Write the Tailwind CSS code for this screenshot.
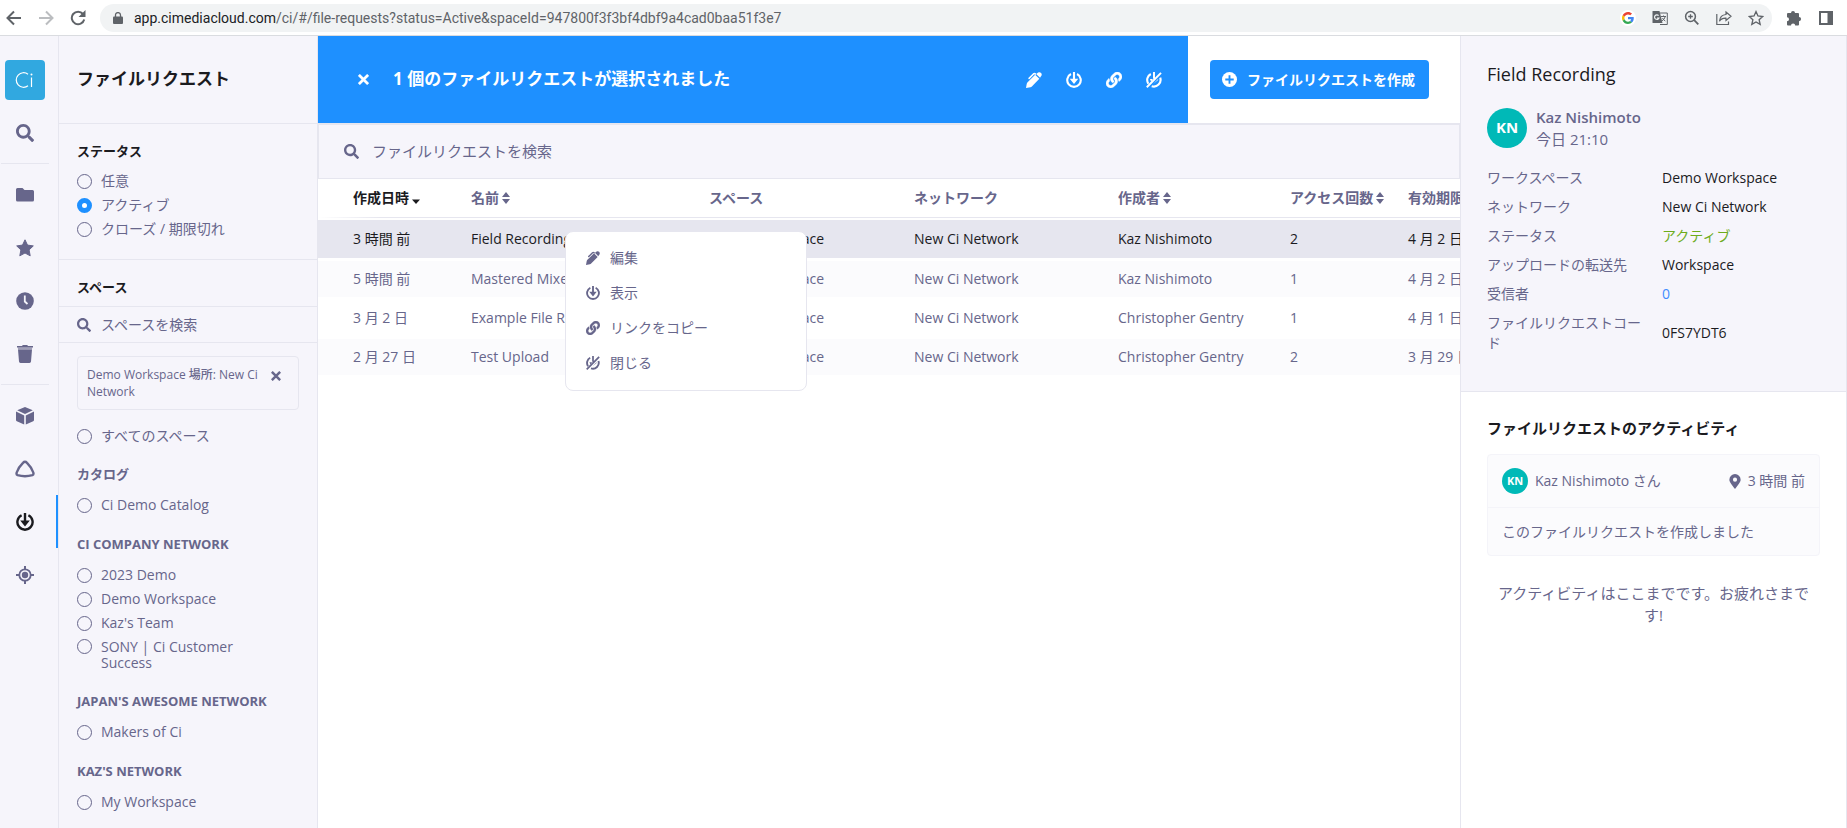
<!DOCTYPE html>
<html lang="ja">
<head>
    <meta charset="UTF-8">
    <meta name="viewport" content="width=device-width, initial-scale=1.0">
    <title>ファイルリクエスト</title>
    <script src="https://cdn.jsdelivr.net/npm/@tailwindcss/browser@4"></script>
</head>
<body class="h-screen flex flex-col overflow-hidden bg-white text-sm text-[#67668b] font-['Open_Sans','Noto_Sans_CJK_JP',sans-serif]">

    <!-- Icon set -->
    <svg class="hidden" aria-hidden="true">
        <symbol id="i-search" viewBox="0 0 512 512"><path fill="currentColor" d="M505 442.700 405.300 343c-4.500-4.500-10.600-7-17-7H372c27.600-35.300 44-79.700 44-128C416 93.100 322.900 0 208 0S0 93.100 0 208s93.100 208 208 208c48.300 0 92.700-16.400 128-44v16.300c0 6.400 2.500 12.500 7 17l99.700 99.700c9.400 9.400 24.600 9.400 33.900 0l28.300-28.300c9.400-9.400 9.400-24.600.1-34zM208 336c-70.700 0-128-57.200-128-128 0-70.700 57.200-128 128-128 70.700 0 128 57.200 128 128 0 70.700-57.200 128-128 128z"/></symbol>
        <symbol id="i-folder" viewBox="0 0 18 14"><path fill="currentColor" d="M1.500 0H6.500L8.500 2H16.500A1.500 1.500 0 0 1 18 3.500V12A1.500 1.500 0 0 1 16.500 13.500H1.500A1.500 1.500 0 0 1 0 12V1.500A1.500 1.500 0 0 1 1.500 0Z"/></symbol>
        <symbol id="i-star" viewBox="0 0 18 18"><path fill="currentColor" stroke="currentColor" stroke-linejoin="round" d="M9 .8 11.500 6.100 17.300 6.900 13.100 10.900 14.200 16.800 9 14 3.800 16.800 4.900 10.900.7 6.900 6.500 6.100Z"/></symbol>
        <symbol id="i-clock" viewBox="0 0 18 18"><circle cx="9" cy="9" r="8.800" fill="currentColor"/><path fill="none" stroke="#f6f5fb" stroke-width="1.800" d="M8.800 3.500V9.500L11.500 12"/></symbol>
        <symbol id="i-trash" viewBox="0 0 16 18"><path fill="currentColor" d="M0 1H5L5.800 0H10.200L11 1H16V2.600H0ZM1 4.500H15L14 16.600A1.500 1.500 0 0 1 12.500 18H3.500A1.500 1.500 0 0 1 2 16.600Z"/><path fill="currentColor" opacity=".6" d="M.8 2.600H15.200L15 4.500H1Z"/></symbol>
        <symbol id="i-cube" viewBox="0 0 18 18"><path fill="currentColor" d="M9 0 16.800 3.200 9 7 1.200 3.200ZM0 4.600 8.200 8.600V17.600L.8 14.300Q0 14 0 13ZM18 4.600 9.800 8.600V17.600L17.200 14.300Q18 14 18 13Z"/></symbol>
        <symbol id="i-tri" viewBox="0 0 20 18"><path fill="none" stroke="currentColor" stroke-width="2.400" stroke-linejoin="round" d="M10 1.800Q11 1.800 12 2.900Q16.700 7.500 18.300 12.500Q18.900 14.500 17.500 15.100Q10 17.300 2.500 15.100Q1.100 14.500 1.700 12.500Q3.300 7.500 8 2.900Q9 1.800 10 1.800Z"/></symbol>
        <symbol id="i-request" viewBox="0 0 18 18"><path fill="none" stroke="currentColor" stroke-width="2.400" d="M5.600 2.300A7.600 7.600 0 1 0 12.400 2.300"/><path fill="currentColor" d="M7.800 0H10.200V7.500H13.800L9 13.600 4.200 7.500H7.800Z"/></symbol>
        <symbol id="i-close-request" viewBox="0 0 18 18"><path fill="none" stroke="currentColor" stroke-width="2.400" d="M5.400 2.300A7.600 7.600 0 0 0 2.600 13.200M16 6.400A7.600 7.600 0 0 1 6.400 16"/><path fill="none" stroke="currentColor" stroke-width="2.200" d="M.9 17.200 16.900 1M9 0V7.500"/><path fill="currentColor" d="M4.400 8H7.800L5.800 11ZM8.400 13.200 13.600 7.900V9Z"/></symbol>
        <symbol id="i-target" viewBox="0 0 18 18"><path stroke="currentColor" stroke-width="2" d="M9 0V4M9 14V18M0 9H4M14 9H18"/><circle cx="9" cy="9" r="5.700" fill="none" stroke="currentColor" stroke-width="1.800"/><circle cx="9" cy="9" r="3.200" fill="currentColor"/></symbol>
        <symbol id="i-pen" viewBox="0 0 18 18"><path fill="currentColor" d="M0 18 .8 13.400Q1 12.300 1.800 11.400L10.300 3 15 7.700 6.600 16.200Q5.900 16.900 5 17.100ZM12.600 1.500Q13.500.4 14.800.3 16 .2 16.900 1.100 17.800 2 17.700 3.200 17.600 4.500 16.500 5.400L15.800 6.600 11.400 2.300Z"/><path fill="none" stroke="currentColor" stroke-width="1.800" stroke-linecap="round" d="M3.500 7.200 8.400 2.200Q9.400 1.300 10.500 2.200"/></symbol>
        <symbol id="i-link" viewBox="0 0 512 512"><path fill="currentColor" stroke="currentColor" stroke-width="12" d="M326.600 185.400c59.700 59.800 58.900 155.700.4 214.600-.1.100-.2.300-.4.400l-67.200 67.200c-59.300 59.300-155.700 59.300-215 0-59.300-59.300-59.300-155.700 0-215l37.100-37.100c9.800-9.800 26.800-3.300 27.300 10.600.6 17.700 3.800 35.500 9.700 52.700 2 5.800.6 12.300-3.800 16.600l-13.100 13.100c-28 28-28.900 73.700-1.200 102 28 28.600 74.100 28.700 102.300.5l67.200-67.200c28.200-28.200 28.100-73.800 0-101.800-3.700-3.700-7.400-6.600-10.300-8.600a16 16 0 0 1-6.900-12.600c-.4-10.600 3.300-21.500 11.700-29.800l21.100-21.100c5.500-5.500 14.200-6.200 20.600-1.700a152.500 152.500 0 0 1 20.500 17.200zM467.500 44.400c-59.300-59.300-155.700-59.300-215 0l-67.200 67.200c-.1.100-.3.300-.4.400-58.600 58.900-59.400 154.800.4 214.600a152.500 152.500 0 0 0 20.500 17.200c6.400 4.500 15.100 3.800 20.600-1.700l21.100-21.100c8.400-8.400 12.100-19.200 11.700-29.800a16 16 0 0 0-6.900-12.600c-2.900-2-6.600-4.900-10.300-8.600-28.100-28.100-28.200-73.600 0-101.800l67.200-67.200c28.200-28.200 74.200-28.100 102.300.5 27.800 28.300 26.900 73.900-1.200 102l-13.100 13.100c-4.400 4.400-5.800 10.800-3.800 16.600 5.900 17.200 9 35 9.700 52.700.5 13.900 17.500 20.400 27.300 10.600l37.100-37.100c59.300-59.300 59.300-155.700 0-215z"/></symbol>
        <symbol id="i-x" viewBox="0 0 12 12"><path stroke="currentColor" stroke-width="3" d="M1 1 11 11M11 1 1 11"/></symbol>
        <symbol id="i-plus" viewBox="0 0 16 16"><circle cx="8" cy="8" r="8" fill="currentColor"/><path stroke="#1e90ff" stroke-width="2" d="M8 3.500V12.500M3.500 8H12.500"/></symbol>
        <symbol id="i-pin" viewBox="0 0 12 16"><path fill="currentColor" fill-rule="evenodd" d="M6 0A6 6 0 0 1 12 6C12 8.500 9.500 11 6 16 2.500 11 0 8.500 0 6A6 6 0 0 1 6 0ZM6 3.800A2.200 2.200 0 1 0 6 8.200 2.200 2.200 0 1 0 6 3.800Z"/></symbol>
        <symbol id="i-sort" viewBox="0 0 8 12"><path fill="currentColor" d="M4 0 8 5H0ZM4 12 0 7H8Z"/></symbol>
        <symbol id="i-sort-down" viewBox="0 0 8 12"><path fill="currentColor" d="M4 12 0 7.500H8Z"/></symbol>
    </svg>

    <!-- Browser bar -->
    <header class="flex h-9 shrink-0 items-center border-b border-[#dadce0] bg-white text-[#5f6368]">
        <button aria-label="戻る" class="flex w-7 justify-center"><svg class="size-4" viewBox="0 0 16 16"><path fill="none" stroke="currentColor" stroke-width="2" d="M15 8H2M8 1.500 1.500 8 8 14.500"/></svg></button>
        <button aria-label="進む" class="ml-1 flex w-7 justify-center text-[#bbbdc0]"><svg class="size-4" viewBox="0 0 16 16"><path fill="none" stroke="currentColor" stroke-width="2" d="M1 8H14M8 1.500 14.500 8 8 14.500"/></svg></button>
        <button aria-label="再読み込み" class="ml-1 flex w-7 justify-center"><svg class="size-4" viewBox="0 0 16 16"><path fill="none" stroke="currentColor" stroke-width="2" d="M13 4A6.300 6.300 0 1 0 14.200 9.500"/><path fill="currentColor" d="M15.500 0V7H8.500Z"/></svg></button>
        <div class="ml-2 flex h-7 flex-1 items-center rounded-full bg-[#f1f3f4] pl-3 pr-2">
            <svg class="mr-[10px] h-3 w-3" viewBox="0 0 10 12"><path fill="currentColor" d="M1 4.500H9Q10 4.500 10 5.500V11Q10 12 9 12H1Q0 12 0 11V5.500Q0 4.500 1 4.500Z"/><path fill="none" stroke="currentColor" stroke-width="1.300" d="M2.500 5V3A2.500 2.400 0 0 1 7.500 3V5"/></svg>
            <p class="flex-1 font-['Roboto',sans-serif] text-sm whitespace-nowrap"><span class="text-[#202124]">app.cimediacloud.com</span>/ci/#/file-requests?status=Active&amp;spaceId=947800f3f3bf4dbf9a4cad0baa51f3e7</p>
            <div class="flex items-center gap-4">
                <button aria-label="Google" class="flex size-4 items-center justify-center rounded-full bg-white"><svg class="size-3" viewBox="0 0 48 48"><path fill="#ea4335" d="M24 9.500c3.500 0 6.700 1.200 9.200 3.600l6.900-6.900C35.900 2.400 30.500 0 24 0 14.600 0 6.500 5.400 2.600 13.200l8 6.200C12.400 13.700 17.700 9.500 24 9.500z"/><path fill="#4285f4" d="M47 24.600c0-1.600-.2-3.100-.4-4.600H24v9h12.900c-.6 3-2.300 5.500-4.800 7.200l7.700 6C44.400 38 47 31.800 47 24.600z"/><path fill="#fbbc05" d="M10.500 28.600c-.5-1.500-.8-3-.8-4.600s.3-3.100.8-4.600l-8-6.200C.9 16.500 0 20.100 0 24s.9 7.500 2.600 10.800z"/><path fill="#34a853" d="M24 48c6.500 0 11.900-2.100 15.900-5.800l-7.700-6c-2.200 1.500-4.900 2.300-8.200 2.300-6.300 0-11.600-4.200-13.500-9.900l-8 6.200C6.500 42.600 14.600 48 24 48z"/></svg></button>
                <button aria-label="翻訳" class="flex size-4 items-center justify-center"><svg class="size-4" viewBox="0 0 16 16"><path fill="none" stroke="currentColor" d="M8 3H15.300V14.500H8M9 6.500H14M11.500 5.500V6.500M13.300 6.500Q12.500 9.500 9.800 11M10.500 8Q11.500 10 13.300 11"/><path fill="currentColor" d="M1 1H7.500L10.500 13H1Q.5 13 .5 12.500V1.500Q.5 1 1 1Z"/><path fill="none" stroke="#f1f3f4" stroke-width="1.200" d="M6.600 5.600A2.300 2.300 0 1 0 7 8H5"/></svg></button>
                <button aria-label="ズーム" class="flex size-4 items-center justify-center"><svg class="size-4" viewBox="0 0 16 16"><circle cx="6.500" cy="6.500" r="4.900" fill="none" stroke="currentColor" stroke-width="1.500"/><path stroke="currentColor" stroke-width="1.300" d="M6.500 4.200V8.800M4.200 6.500H8.800"/><path stroke="currentColor" stroke-width="1.800" d="M10.200 10.200 14.300 14.300"/></svg></button>
                <button aria-label="共有" class="flex size-4 items-center justify-center"><svg class="size-4" viewBox="0 0 16 16"><path fill="none" stroke="currentColor" stroke-width="1.200" d="M.8 4V14.500H12.500V11.500M10 2 15 6.300 10 10.500V8.200Q5.500 8 3.500 11.300 4 5 10 4.500Z"/></svg></button>
                <button aria-label="ブックマーク" class="flex size-4 items-center justify-center"><svg class="size-4" viewBox="0 0 18 18"><path fill="none" stroke="currentColor" stroke-width="1.500" d="M9 1.800 11.200 6.700 16.500 7.300 12.500 10.900 13.700 16.200 9 13.400 4.300 16.200 5.500 10.900 1.500 7.300 6.800 6.700Z"/></svg></button>
            </div>
        </div>
        <button aria-label="拡張機能" class="ml-3 flex w-5 justify-center"><svg class="size-4" viewBox="0 0 16 16"><path fill="currentColor" d="M5 3A2 2 0 0 1 9 3H12Q13 3 13 4V7A2.100 2.100 0 0 1 13 11.200V14.500Q13 15.500 12 15.500H9.200A2 2 0 0 0 5 15.500H2Q1 15.500 1 14.500V11.200A2 2 0 0 0 1 7.200V4Q1 3 2 3Z"/></svg></button>
        <button aria-label="サイドパネル" class="mr-[11px] ml-3 flex w-5 justify-center"><svg class="size-4" viewBox="0 0 16 16"><path fill="currentColor" fill-rule="evenodd" d="M1 1H15V15H1ZM3 3V13H9.500V3Z"/></svg></button>
    </header>

    <div class="flex min-h-0 flex-1">
        <!-- Icon rail -->
        <nav class="flex w-[59px] shrink-0 flex-col border-r border-[#e6e6ef] bg-[#f6f5fb] pt-6">
            <a href="#" aria-label="Ci" class="mb-[6px] ml-[5px] flex size-10 items-center justify-center rounded bg-[#31a8e0] text-white">
                <svg class="size-5" viewBox="0 0 20 20"><path fill="none" stroke="currentColor" stroke-width="1.200" d="M13 4.200A7.300 7.300 0 1 0 13 15.800M16.500 7.500V17"/><circle cx="16.500" cy="4.500" r="1" fill="currentColor"/></svg>
            </a>
            <a href="#" aria-label="検索" class="flex h-[53px] w-[50px] items-center justify-center"><svg class="size-[18px]"><use href="#i-search"/></svg></a>
            <hr class="my-1 ml-px w-12 border-[#e6e6ef]">
            <a href="#" aria-label="フォルダ" class="flex h-[53px] w-[50px] items-center justify-center"><svg class="h-[14px] w-[18px]"><use href="#i-folder"/></svg></a>
            <a href="#" aria-label="お気に入り" class="flex h-[53px] w-[50px] items-center justify-center"><svg class="size-[18px]"><use href="#i-star"/></svg></a>
            <a href="#" aria-label="最近" class="flex h-[53px] w-[50px] items-center justify-center"><svg class="size-[18px]"><use href="#i-clock"/></svg></a>
            <a href="#" aria-label="ゴミ箱" class="flex h-[53px] w-[50px] items-center justify-center"><svg class="h-[18px] w-4"><use href="#i-trash"/></svg></a>
            <hr class="my-1 ml-px w-12 border-[#e6e6ef]">
            <a href="#" aria-label="ワークスペース" class="flex h-[53px] w-[50px] items-center justify-center"><svg class="size-[18px]"><use href="#i-cube"/></svg></a>
            <a href="#" aria-label="カタログ" class="flex h-[53px] w-[50px] items-center justify-center"><svg class="h-[18px] w-5"><use href="#i-tri"/></svg></a>
            <a href="#" aria-label="ファイルリクエスト" aria-current="page" class="flex h-[53px] items-center justify-center border-r-2 border-[#1e90ff] pr-[6px] text-[#1b1b1f]"><svg class="size-[18px]"><use href="#i-request"/></svg></a>
            <a href="#" aria-label="ターゲット" class="flex h-[53px] w-[50px] items-center justify-center"><svg class="size-[18px]"><use href="#i-target"/></svg></a>
        </nav>

        <!-- Filters -->
        <aside class="w-[259px] shrink-0 overflow-hidden border-r border-[#e6e6ef] bg-[#f6f5fb]">
            <h1 class="flex h-[88px] items-center border-b border-[#e6e6ef] px-[18px] text-[17px] font-bold text-[#1b1b1f]">ファイルリクエスト</h1>

            <fieldset class="h-[136px] border-b border-[#e6e6ef] px-[18px] pt-[17px]">
                <legend class="float-left mb-2 w-full text-[13px] leading-5 font-bold text-[#1b1b1f]">ステータス</legend>
                <label class="clear-both flex h-6 items-center gap-[9px]"><input type="radio" name="status" class="size-[15px] shrink-0 appearance-none rounded-full border border-[#67668b] checked:border-[5px] checked:border-[#1e90ff] checked:bg-white">任意</label>
                <label class="flex h-6 items-center gap-[9px]"><input type="radio" name="status" checked class="size-[15px] shrink-0 appearance-none rounded-full border border-[#67668b] checked:border-[5px] checked:border-[#1e90ff] checked:bg-white">アクティブ</label>
                <label class="flex h-6 items-center gap-[9px]"><input type="radio" name="status" class="size-[15px] shrink-0 appearance-none rounded-full border border-[#67668b] checked:border-[5px] checked:border-[#1e90ff] checked:bg-white">クローズ / 期限切れ</label>
            </fieldset>

            <h2 class="border-b border-[#e6e6ef] px-[18px] pt-[17px] pb-[9px] text-[13px] leading-5 font-bold text-[#1b1b1f]">スペース</h2>
            <label class="flex h-9 items-center gap-[10px] border-b border-[#e6e6ef] px-[18px]">
                <svg class="size-[14px] shrink-0"><use href="#i-search"/></svg>
                <input type="text" aria-label="スペースを検索" placeholder="スペースを検索" class="w-full bg-transparent outline-none placeholder:text-[#67668b]">
            </label>

            <div class="mx-[18px] mt-[13px] flex items-start rounded border border-[#e6e6ef] py-[9px] pl-[9px] pr-4 text-xs leading-[17px] font-medium">
                <p class="w-[180px]">Demo Workspace 場所: New Ci Network</p>
                <button aria-label="削除" class="mt-[5px] ml-1 shrink-0"><svg class="size-[10px]"><use href="#i-x"/></svg></button>
            </div>

            <div class="px-[18px] pt-[14px]">
                <label class="flex h-6 items-center gap-[9px]"><input type="radio" name="space" class="size-[15px] shrink-0 appearance-none rounded-full border border-[#67668b]">すべてのスペース</label>

                <h3 class="mt-4 mb-[9px] text-[13px] leading-5 font-bold">カタログ</h3>
                <label class="flex h-6 items-center gap-[9px]"><input type="radio" name="space" class="size-[15px] shrink-0 appearance-none rounded-full border border-[#67668b]">Ci Demo Catalog</label>

                <h3 class="mt-[17px] mb-[9px] text-[13px] leading-5 font-bold">CI COMPANY NETWORK</h3>
                <label class="flex h-6 items-center gap-[9px]"><input type="radio" name="space" class="size-[15px] shrink-0 appearance-none rounded-full border border-[#67668b]">2023 Demo</label>
                <label class="flex h-6 items-center gap-[9px]"><input type="radio" name="space" class="size-[15px] shrink-0 appearance-none rounded-full border border-[#67668b]">Demo Workspace</label>
                <label class="flex h-6 items-center gap-[9px]"><input type="radio" name="space" class="size-[15px] shrink-0 appearance-none rounded-full border border-[#67668b]">Kaz's Team</label>
                <label class="flex items-start gap-[9px] py-1 leading-4"><input type="radio" name="space" class="size-[15px] shrink-0 appearance-none rounded-full border border-[#67668b]"><span class="w-[150px]">SONY | Ci Customer Success</span></label>

                <h3 class="mt-4 mb-[9px] text-[13px] leading-5 font-bold">JAPAN'S AWESOME NETWORK</h3>
                <label class="flex h-6 items-center gap-[9px]"><input type="radio" name="space" class="size-[15px] shrink-0 appearance-none rounded-full border border-[#67668b]">Makers of Ci</label>

                <h3 class="mt-[17px] mb-[9px] text-[13px] leading-5 font-bold">KAZ'S NETWORK</h3>
                <label class="flex h-6 items-center gap-[9px]"><input type="radio" name="space" class="size-[15px] shrink-0 appearance-none rounded-full border border-[#67668b]">My Workspace</label>
            </div>
        </aside>

        <!-- Request list -->
        <main class="relative min-w-0 flex-1 overflow-hidden">
            <div class="flex h-[87px]">
                <div class="flex flex-1 items-center bg-[#1e90ff] pl-10 pr-[26px] text-white">
                    <button aria-label="選択を解除"><svg class="size-[11px]"><use href="#i-x"/></svg></button>
                    <p class="ml-6 text-[17px] font-bold">1 個のファイルリクエストが選択されました</p>
                    <div class="ml-auto flex gap-6">
                        <button aria-label="編集"><svg class="size-4"><use href="#i-pen"/></svg></button>
                        <button aria-label="表示"><svg class="size-4"><use href="#i-request"/></svg></button>
                        <button aria-label="リンクをコピー"><svg class="size-4"><use href="#i-link"/></svg></button>
                        <button aria-label="閉じる"><svg class="size-4"><use href="#i-close-request"/></svg></button>
                    </div>
                </div>
                <div class="flex w-[272px] shrink-0 items-center pl-[22px]">
                    <button class="flex h-[39px] w-[219px] items-center gap-[10px] rounded bg-[#1e90ff] pl-3 font-bold whitespace-nowrap text-white"><svg class="size-[15px] shrink-0"><use href="#i-plus"/></svg>ファイルリクエストを作成</button>
                </div>
            </div>
            <label class="flex h-14 items-center gap-[13px] border-x border-t-2 border-b border-[#e6e6ef] bg-[#f6f5fb] pl-[25px]">
                <svg class="size-[15px] shrink-0"><use href="#i-search"/></svg>
                <input type="text" aria-label="ファイルリクエストを検索" placeholder="ファイルリクエストを検索" class="flex-1 bg-transparent text-[15px] outline-none placeholder:text-[#67668b]">
            </label>

            <table class="w-full min-w-[1240px] table-fixed text-left whitespace-nowrap">
                <colgroup>
                    <col class="w-[153px]"><col class="w-[238px]"><col class="w-[205px]"><col class="w-[204px]"><col class="w-[172px]"><col class="w-[118px]"><col>
                </colgroup>
                <thead>
                    <tr class="h-[38px]">
                        <th class="p-0 pl-[35px] text-[#1b1b1f]"><button class="flex items-center gap-[3px] font-bold">作成日時<svg class="h-3 w-2"><use href="#i-sort-down"/></svg></button></th>
                        <th class="p-0"><button class="flex items-center gap-[3px] font-bold">名前<svg class="h-3 w-2"><use href="#i-sort"/></svg></button></th>
                        <th class="p-0">スペース</th>
                        <th class="p-0">ネットワーク</th>
                        <th class="p-0"><button class="flex items-center gap-[3px] font-bold">作成者<svg class="h-3 w-2"><use href="#i-sort"/></svg></button></th>
                        <th class="p-0"><button class="flex items-center gap-[3px] font-bold">アクセス回数<svg class="h-3 w-2"><use href="#i-sort"/></svg></button></th>
                        <th class="p-0"><button class="flex items-center gap-[3px] font-bold">有効期限<svg class="h-3 w-2"><use href="#i-sort"/></svg></button></th>
                    </tr>
                    <tr><td colspan="7" class="p-0"><div class="mb-[2px] h-px bg-linear-to-r from-white to-[#e6e6ef] to-5%"></div></td></tr>
                </thead>
                <tbody>
                    <tr class="h-[39px] text-[#1b1b1f] [&>td]:bg-[#e6e6ef] [&>td]:bg-clip-padding [&>td]:border-b-3 [&>td]:border-white">
                        <td class="pl-[35px]">3 時間 前</td><td>Field Recording</td><td>Demo Workspace</td><td>New Ci Network</td><td>Kaz Nishimoto</td><td>2</td><td>4 月 2 日</td>
                    </tr>
                    <tr class="h-[39px] [&>td]:bg-[#fbfbfd] [&>td]:bg-clip-padding [&>td]:border-b-3 [&>td]:border-white">
                        <td class="pl-[35px]">5 時間 前</td><td>Mastered Mixes</td><td>Demo Workspace</td><td>New Ci Network</td><td>Kaz Nishimoto</td><td>1</td><td>4 月 2 日</td>
                    </tr>
                    <tr class="h-[39px] [&>td]:border-b-3 [&>td]:border-white">
                        <td class="pl-[35px]">3 月 2 日</td><td>Example File Request</td><td>Demo Workspace</td><td>New Ci Network</td><td>Christopher Gentry</td><td>1</td><td>4 月 1 日</td>
                    </tr>
                    <tr class="h-[39px] [&>td]:bg-[#fbfbfd] [&>td]:bg-clip-padding [&>td]:border-b-3 [&>td]:border-white">
                        <td class="pl-[35px]">2 月 27 日</td><td>Test Upload</td><td>Demo Workspace</td><td>New Ci Network</td><td>Christopher Gentry</td><td>2</td><td>3 月 29 日</td>
                    </tr>
                </tbody>
            </table>

            <!-- Context menu -->
            <div role="menu" class="absolute top-[195px] left-[247px] flex w-[242px] flex-col rounded-lg border border-[#e6e6ef] bg-white pt-2 pb-[10px]">
                <button role="menuitem" class="flex h-[35px] items-center gap-[10px] pl-5"><svg class="size-[14px]"><use href="#i-pen"/></svg>編集</button>
                <button role="menuitem" class="flex h-[35px] items-center gap-[10px] pl-5"><svg class="size-[14px]"><use href="#i-request"/></svg>表示</button>
                <button role="menuitem" class="flex h-[35px] items-center gap-[10px] pl-5"><svg class="size-[14px]"><use href="#i-link"/></svg>リンクをコピー</button>
                <button role="menuitem" class="flex h-[35px] items-center gap-[10px] pl-5"><svg class="size-[14px]"><use href="#i-close-request"/></svg>閉じる</button>
            </div>
        </main>

        <!-- Details -->
        <aside class="w-[387px] shrink-0 border-x border-[#e6e6ef] bg-white">
            <section class="h-[356px] border-b border-[#e6e6ef] bg-[#f6f5fb] px-[26px] pt-[26px]">
                <h2 class="text-lg leading-6 font-medium text-[#1b1b1f]">Field Recording</h2>
                <div class="mt-5 flex items-center gap-[9px] text-[15px]">
                    <span class="flex size-10 items-center justify-center rounded-full bg-[#00b9b7] font-bold text-white">KN</span>
                    <div class="leading-[22px]">
                        <p class="font-semibold">Kaz Nishimoto</p>
                        <p>今日 21:10</p>
                    </div>
                </div>
                <dl class="mt-[18px] grid grid-cols-[159px_1fr] items-center gap-x-4 gap-y-[9px] leading-5 [&>dd]:text-[#1b1b1f]">
                    <dt>ワークスペース</dt><dd>Demo Workspace</dd>
                    <dt>ネットワーク</dt><dd>New Ci Network</dd>
                    <dt>ステータス</dt><dd><span class="text-[#6dac1b]">アクティブ</span></dd>
                    <dt>アップロードの転送先</dt><dd>Workspace</dd>
                    <dt>受信者</dt><dd><a href="#" class="text-[#3f8cff]">0</a></dd>
                    <dt>ファイルリクエストコード</dt><dd>0FS7YDT6</dd>
                </dl>
            </section>
            <section class="px-[26px] pt-6">
                <h3 class="text-[15px] leading-6 font-bold text-[#1b1b1f]">ファイルリクエストのアクティビティ</h3>
                <article class="mt-[14px] rounded border border-[#f4f4f9] bg-[#fbfbfd]">
                    <div class="flex h-[53px] items-center border-b border-[#f4f4f9] px-[14px]">
                        <span class="mr-[7px] flex size-[26px] items-center justify-center rounded-full bg-[#00b9b7] text-[11px] font-bold text-white">KN</span>
                        Kaz Nishimoto さん
                        <svg class="mr-[7px] ml-auto h-[15px] w-3"><use href="#i-pin"/></svg>
                        <time>3 時間 前</time>
                    </div>
                    <p class="flex h-[47px] items-center px-[14px]">このファイルリクエストを作成しました</p>
                </article>
                <p class="mt-[26px] px-2 text-center text-[15px] leading-[22px]">アクティビティはここまでです。お疲れさまです!</p>
            </section>
        </aside>
    </div>
</body>
</html>
